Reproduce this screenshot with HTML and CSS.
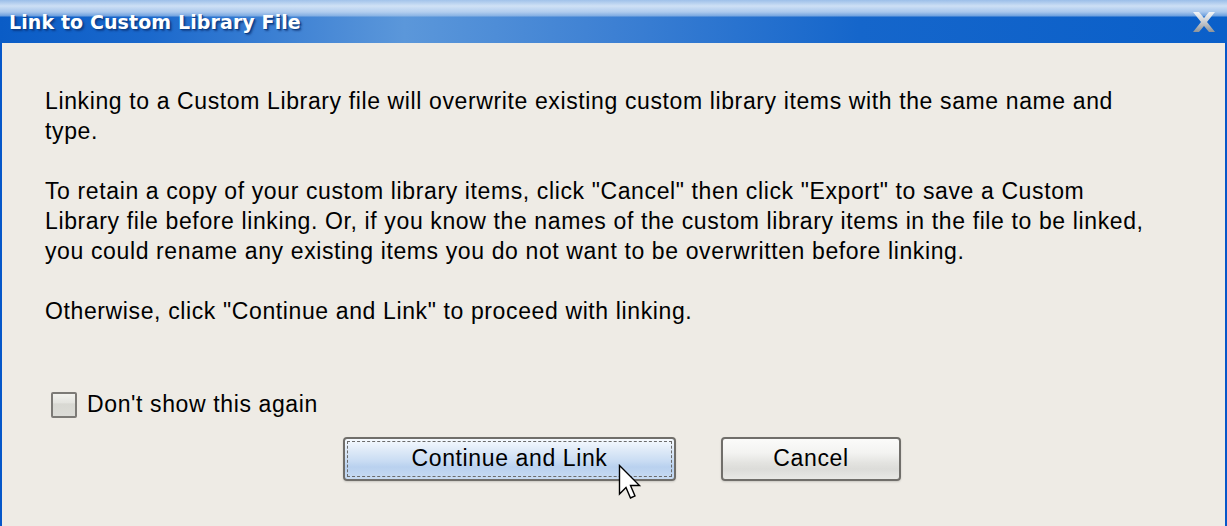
FILE: index.html
```html
<!DOCTYPE html>
<html>
<head>
<meta charset="utf-8">
<link rel="stylesheet" href="styles.css">
</head>
<body>
<div class="window">
  <div class="titlebar">
    <span class="title">Link to Custom Library File</span>
    <svg class="close" width="26" height="24" viewBox="0 0 26 24">
      <defs>
        <linearGradient id="xg" x1="0" y1="0" x2="0" y2="1">
          <stop offset="0" stop-color="#f4f6f8"/>
          <stop offset="0.5" stop-color="#c9ccd0"/>
          <stop offset="1" stop-color="#8e9398"/>
        </linearGradient>
      </defs>
      <path d="M2 2 H8 L13 8 L18 2 H24 L16 12 L24 22 H18 L13 16 L8 22 H2 L10 12 Z" fill="url(#xg)"/>
    </svg>
  </div>
  <div class="content">
    <p class="para">Linking to a Custom Library file will overwrite existing custom library items with the same name and type.</p>
    <p class="para">To retain a copy of your custom library items, click "Cancel" then click "Export" to save a Custom Library file before linking. Or, if you know the names of the custom library items in the file to be linked, you could rename any existing items you do not want to be overwritten before linking.</p>
    <p class="para">Otherwise, click "Continue and Link" to proceed with linking.</p>
    <label class="check-row">
      <span class="checkbox"></span>
      <span class="check-label">Don't show this again</span>
    </label>
    <div class="buttons">
      <button class="btn btn-primary"><span class="focus">Continue and Link</span></button>
      <button class="btn btn-cancel">Cancel</button>
    </div>
  </div>
  <svg class="cursor" width="24" height="38" viewBox="0 0 24 38">
    <path d="M1.5 1.5 V30 L8 23.5 L12.5 34 L17 32 L12.5 21.5 H21.5 Z" fill="#fff" stroke="#000" stroke-width="1.4" stroke-linejoin="miter"/>
  </svg>
</div>
</body>
</html>
```
FILE: styles.css
```css
html, body {
  margin: 0;
  padding: 0;
  width: 1227px;
  height: 526px;
  overflow: hidden;
  background: #eeebe5;
}
.window {
  position: relative;
  width: 1227px;
  height: 526px;
  box-sizing: border-box;
  border-left: 2px solid #0657c9;
  border-right: 2px solid #0657c9;
  background: #eeebe5;
  font-family: "Liberation Sans", Arial, sans-serif;
  color: #000;
}
.titlebar {
  height: 43px;
  margin: 0 -2px;
  display: flex;
  align-items: center;
  justify-content: space-between;
  padding: 0 10px 0 9px;
  box-sizing: border-box;
  background:
    linear-gradient(to bottom, rgba(170,200,236,0.9) 0px, rgba(215,230,247,0.95) 6px, rgba(195,216,242,0.85) 12px, rgba(170,200,236,0.6) 16px, rgba(255,255,255,0) 17px),
    linear-gradient(to right, #0a5cc6 0%, #1a68cc 12%, #4a8ad6 27%, #5b97da 33%, #3d80d3 50%, #1566cb 70%, #0a5fc9 100%);
}
.title {
  font-family: "DejaVu Sans", Verdana, sans-serif;
  font-weight: bold;
  font-size: 19px;
  color: #fff;
  text-shadow: 1px 1px 0 #0a3f8a, 2px 2px 2px rgba(10,40,100,0.6);
  letter-spacing: 0.1px;
  padding-top: 1px;
}
.close {
  display: block;
}
.content {
  padding: 43px 70px 0 43px;
  font-size: 23px;
  line-height: 30px;
  letter-spacing: 0.62px;
}
.para {
  margin: 0 0 30px 0;
}
.para:nth-of-type(3) {
  margin-bottom: 65px;
}
.check-row {
  display: flex;
  align-items: center;
  gap: 10px;
  margin-left: 6px;
  height: 27px;
}
.checkbox {
  width: 22px;
  height: 22px;
  border: 2px solid #7c7a76;
  border-radius: 2px;
  background: linear-gradient(to bottom, #f2f2ee 0%, #e4e4df 40%, #d8d8d2 45%, #dcdcd7 100%);
}
.check-label {
  line-height: 27px;
}
.buttons {
  display: flex;
  gap: 45px;
  margin-top: 19px;
  margin-left: 298px;
}
.btn {
  height: 44px;
  box-sizing: border-box;
  border: 2px solid #706e6a;
  border-radius: 4px;
  font-family: "Liberation Sans", Arial, sans-serif;
  font-size: 23px;
  letter-spacing: 0.62px;
  color: #000;
  padding: 0;
  box-shadow: 0 1px 2px rgba(0,0,0,0.15);
}
.btn-primary {
  width: 333px;
  padding: 2px;
  background: linear-gradient(to bottom, #f7fbff 0%, #dde9f7 30%, #c9dcf3 55%, #b9d1ef 70%, #c8dbf2 100%);
}
.focus {
  display: flex;
  align-items: center;
  justify-content: center;
  height: 100%;
  box-sizing: border-box;
  border: 1px dashed #6b6b6b;
  padding-bottom: 2px;
}
.btn-cancel {
  width: 180px;
  background: linear-gradient(to bottom, #fbfbfa 0%, #f3f3f1 35%, #e3e3e0 60%, #dcdcd9 75%, #e8e8e5 100%);
  padding-bottom: 2px;
}
.cursor {
  position: absolute;
  left: 616px;
  top: 464px;
}
```
